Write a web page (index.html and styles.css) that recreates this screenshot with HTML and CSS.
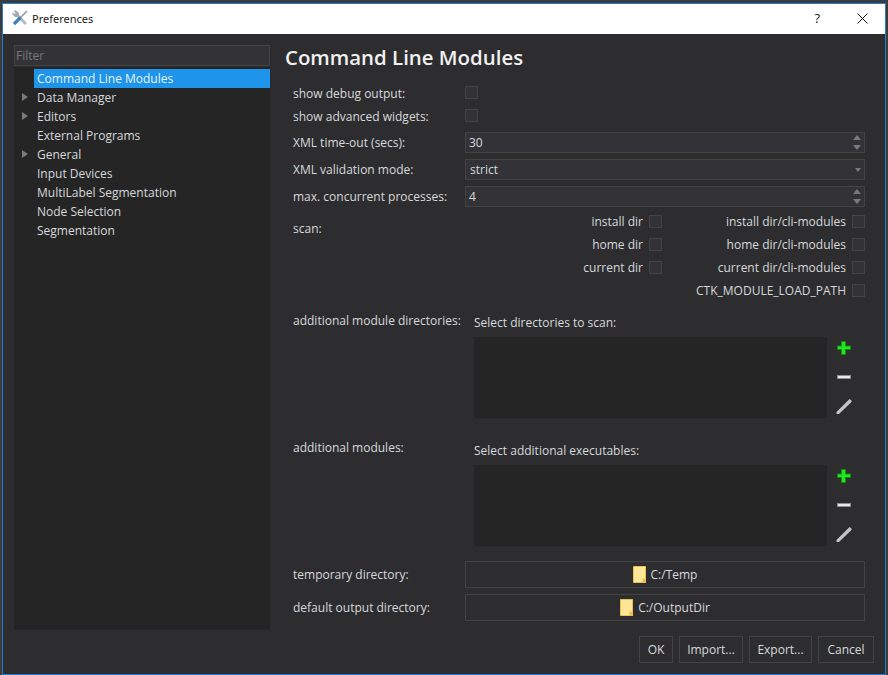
FILE: index.html
```html
<!DOCTYPE html>
<html lang="en">
<head>
  <meta charset="UTF-8" />
  <title>Preferences</title>
  <link rel="stylesheet" href="styles.css">
</head>
<body>
  <div class="window">
    <div class="titlebar">
      <svg class="app-icon" width="16" height="16" viewBox="0 0 16 16">
        <path d="M4.5 4.5 L14 14" stroke="#b4bac0" stroke-width="3" fill="none"/>
        <path d="M4 0.5 L1.5 0.5 L3.5 3 L2.5 4 L0.5 2 L0.5 4.5 L3 7 L5.5 7 L7 5.5 L7 3 Z" fill="#a3abb2"/>
        <path d="M15 1 L8 8" stroke="#8f99a3" stroke-width="1.6" fill="none"/>
        <path d="M8.5 7.5 L2 14" stroke="#3f7fc0" stroke-width="3.2" fill="none"/>
      </svg>
      <span class="title">Preferences</span>
      <span class="help">?</span>
      <svg class="close" width="11" height="11" viewBox="0 0 11 11">
        <path d="M0.5 0.5 L10.5 10.5 M10.5 0.5 L0.5 10.5" stroke="#111" stroke-width="1" fill="none"/>
      </svg>
    </div>

    <div class="content">
      <div class="sidebar">
        <input class="filter" type="text" placeholder="Filter">
        <ul class="tree">
          <li class="selected"><span>Command Line Modules</span></li>
          <li class="branch"><span>Data Manager</span></li>
          <li class="branch"><span>Editors</span></li>
          <li><span>External Programs</span></li>
          <li class="branch"><span>General</span></li>
          <li><span>Input Devices</span></li>
          <li><span>MultiLabel Segmentation</span></li>
          <li><span>Node Selection</span></li>
          <li><span>Segmentation</span></li>
        </ul>
      </div>

      <div class="page">
        <h1>Command Line Modules</h1>
        <div class="form">
          <label class="row-check top">show debug output:</label>
          <div class="row-check top"><span class="check"></span></div>
          <label class="row-check">show advanced widgets:</label>
          <div class="row-check"><span class="check"></span></div>

          <label class="row-field">XML time-out (secs):</label>
          <div class="field spin">30<span class="arrows"><i class="up"></i><i class="down"></i></span></div>
          <label class="row-field">XML validation mode:</label>
          <div class="field combo">strict<i class="combo-arrow"></i></div>
          <label class="row-field">max. concurrent processes:</label>
          <div class="field spin">4<span class="arrows"><i class="up"></i><i class="down"></i></span></div>

          <label class="scan-label">scan:</label>
          <div class="scan">
            <span>install dir</span><span class="check"></span>
            <span>install dir/cli-modules</span><span class="check"></span>
            <span>home dir</span><span class="check"></span>
            <span>home dir/cli-modules</span><span class="check"></span>
            <span>current dir</span><span class="check"></span>
            <span>current dir/cli-modules</span><span class="check"></span>
            <span></span><span></span>
            <span>CTK_MODULE_LOAD_PATH</span><span class="check"></span>
          </div>

          <label class="list-label">additional module directories:</label>
          <div class="list-block">
            <div class="list-title">Select directories to scan:</div>
            <div class="list-row">
              <div class="listbox"></div>
              <div class="tools">
                <svg width="16" height="16" viewBox="0 0 16 16"><path d="M5.5 1.5 H9.5 V6 H14.5 V9.5 H9.5 V14.5 H5.5 V9.5 H1.5 V6 H5.5 Z" fill="#22e622" stroke="#0c930c" stroke-width="1"/></svg>
                <svg width="16" height="16" viewBox="0 0 16 16"><rect x="1.5" y="6.5" width="13" height="3" fill="#e8e8e8" stroke="#8c8c8c"/></svg>
                <svg width="16" height="16" viewBox="0 0 16 16"><path d="M0.5 14 L13.5 1 L15.5 2.5 L15.5 4 L3 16 L0.5 16 Z" fill="#c4c4c4"/></svg>
              </div>
            </div>
          </div>

          <label class="list-label second-label">additional modules:</label>
          <div class="list-block second">
            <div class="list-title">Select additional executables:</div>
            <div class="list-row">
              <div class="listbox"></div>
              <div class="tools">
                <svg width="16" height="16" viewBox="0 0 16 16"><path d="M5.5 1.5 H9.5 V6 H14.5 V9.5 H9.5 V14.5 H5.5 V9.5 H1.5 V6 H5.5 Z" fill="#22e622" stroke="#0c930c" stroke-width="1"/></svg>
                <svg width="16" height="16" viewBox="0 0 16 16"><rect x="1.5" y="6.5" width="13" height="3" fill="#e8e8e8" stroke="#8c8c8c"/></svg>
                <svg width="16" height="16" viewBox="0 0 16 16"><path d="M0.5 14 L13.5 1 L15.5 2.5 L15.5 4 L3 16 L0.5 16 Z" fill="#c4c4c4"/></svg>
              </div>
            </div>
          </div>

          <label class="dir-label first">temporary directory:</label>
          <div class="dir-btn first">
            <svg class="folder" width="13" height="17" viewBox="0 0 13 17"><path d="M0.5 0.5 H12.5 V16.5 H0.5 Z" fill="#ffe597" stroke="#e8c24e"/><path d="M9.5 16 V12.5 H13 V17 H9.5 Z" fill="#e8c24e"/></svg>
            C:/Temp
          </div>
          <label class="dir-label">default output directory:</label>
          <div class="dir-btn">
            <svg class="folder" width="13" height="17" viewBox="0 0 13 17"><path d="M0.5 0.5 H12.5 V16.5 H0.5 Z" fill="#ffe597" stroke="#e8c24e"/><path d="M9.5 16 V12.5 H13 V17 H9.5 Z" fill="#e8c24e"/></svg>
            C:/OutputDir
          </div>
        </div>
      </div>
    </div>

    <div class="buttons">
      <button class="btn-ok">OK</button>
      <button class="btn-import">Import...</button>
      <button class="btn-export">Export...</button>
      <button class="btn-cancel">Cancel</button>
    </div>
  </div>
</body>
</html>
```

FILE: styles.css
```css
html, body {
  margin: 0;
  padding: 0;
  background: #3a3d40;
}

body {
  width: 888px;
  height: 675px;
  overflow: hidden;
  font-family: "Open Sans", "Noto Sans", sans-serif;
  font-size: 12px;
  color: #d6d9dc;
}

.window {
  box-sizing: border-box;
  width: 884px;
  height: 672px;
  margin: 3px 0 0 2px;
  border: 1px solid #2b7cc4;
  background: #2d2d30;
}

.titlebar {
  box-sizing: border-box;
  height: 30px;
  background: #fff;
  color: #111;
  display: flex;
  align-items: center;
  padding: 0 0 2px 9px;
}

.title {
  margin-left: 4px;
  font-family: "Noto Sans", sans-serif;
  font-size: 11px;
  color: #1a1a1a;
}

.help {
  margin-left: auto;
  font-size: 13px;
}

.close {
  margin: 0 17px 0 37px;
}

.content {
  display: flex;
  padding: 11px 0 0 11px;
  height: 596px;
  box-sizing: border-box;
}

/* left side */
.sidebar {
  width: 256px;
  flex: none;
  display: flex;
  flex-direction: column;
}

.filter {
  box-sizing: border-box;
  height: 21px;
  width: 100%;
  margin: 0;
  padding: 0 1px;
  background: #333337;
  border: 1px solid #434346;
  font: 12px "Open Sans", sans-serif;
  color: #d6d9dc;
}

.filter::placeholder {
  color: #77797c;
}

.tree {
  list-style: none;
  margin: 1px 0 0;
  padding: 2px 0 0;
  flex: 1;
  background: #252526;
}

.tree li {
  height: 19px;
  line-height: 19px;
  margin-left: 20px;
  padding-left: 3px;
  position: relative;
  color: #d6d9dc;
  font-size: 12px;
}

.tree li.selected {
  background: #1e95ea;
  color: #e8f2fa;
}

.tree li.branch::before {
  content: "";
  position: absolute;
  left: -12px;
  top: 5px;
  border-left: 6px solid #7a7a7a;
  border-top: 4.5px solid transparent;
  border-bottom: 4.5px solid transparent;
}

/* right side */
.page {
  flex: 1;
  padding-left: 15px;
}

h1 {
  margin: 0 0 1px;
  height: 25px;
  line-height: 25px;
  font-size: 20.4px;
  font-weight: 600;
  color: #f1f1f1;
}

.form {
  display: grid;
  grid-template-columns: 172px 400px;
  margin: 0 0 0 8px;
  font-size: 12px;
}

.form label {
  color: #d6d9dc;
}

.row-check {
  height: 23px;
  line-height: 23px;
}

.row-check .check {
  display: block;
  margin-top: 4px;
}

.top {
  margin-top: 11px;
}

.check {
  box-sizing: border-box;
  width: 13px;
  height: 13px;
  background: #333337;
  border: 1px solid #434346;
  flex: none;
}

.row-field {
  height: 21px;
  line-height: 21px;
  margin-bottom: 6px;
}

label.row-field:nth-of-type(3),
label.row-field:nth-of-type(3) + .field {
  margin-top: 4px;
}

.field {
  box-sizing: border-box;
  height: 21px;
  line-height: 19px;
  margin-bottom: 6px;
  padding-left: 3px;
  position: relative;
  background: #333337;
  border: 1px solid #434346;
  color: #d6d9dc;
}

.combo {
  padding-left: 4px;
}

.arrows i,
.combo-arrow {
  position: absolute;
  width: 0;
  height: 0;
  border-left: 4px solid transparent;
  border-right: 4px solid transparent;
}

.arrows .up {
  right: 3px;
  top: 2px;
  border-bottom: 5px solid #77797c;
}

.arrows .down {
  right: 3px;
  bottom: 2px;
  border-top: 5px solid #77797c;
}

.combo-arrow {
  right: 3px;
  top: 8px;
  border-left-width: 3px;
  border-right-width: 3px;
  border-top: 4px solid #77797c;
}

.scan-label {
  line-height: 17px;
  margin-top: 7px;
}

.scan {
  display: grid;
  grid-template-columns: 178px 13px 178px 13px;
  column-gap: 6px;
  row-gap: 10px;
  margin-top: 2px;
  justify-content: end;
  grid-auto-rows: 13px;
  line-height: 13px;
  align-items: center;
}

.scan span:nth-child(odd) {
  text-align: right;
  white-space: nowrap;
}

.list-label {
  margin-top: 15px;
  height: 17px;
  line-height: 17px;
  white-space: nowrap;
}

.second-label {
  margin-top: 20px;
}

.list-block {
  margin-top: 18px;
  padding-left: 9px;
  height: 104px;
}

.second {
  margin-top: 24px;
}

.list-title {
  height: 17px;
  line-height: 17px;
  margin-top: -1px;
  margin-bottom: 6px;
}

.list-row {
  display: flex;
  gap: 9px;
}

.listbox {
  width: 353px;
  height: 81px;
  background: #252526;
}

.tools {
  width: 16px;
  height: 81px;
  display: flex;
  flex-direction: column;
  gap: 13px;
  padding-top: 3px;
  box-sizing: border-box;
}

.dir-label {
  height: 27px;
  line-height: 27px;
  margin-bottom: 6px;
}

.dir-btn {
  box-sizing: border-box;
  height: 27px;
  margin-bottom: 6px;
  display: flex;
  align-items: center;
  justify-content: center;
  gap: 5px;
  border: 1px solid #434346;
  background: #2d2d30;
  color: #d6d9dc;
}

.folder {
  flex: none;
}

.first {
  margin-top: 14px;
}

.buttons {
  display: flex;
  justify-content: flex-end;
  gap: 6px;
  padding: 6px 11px 0 0;
}

.buttons button {
  box-sizing: border-box;
  height: 27px;
  padding: 0;
  background: #2d2d30;
  border: 1px solid #434346;
  color: #d6d9dc;
  font: 12px "Open Sans", sans-serif;
}

.btn-ok { width: 34px; }
.btn-import { width: 64px; }
.btn-export { width: 63px; }
.btn-cancel { width: 56px; }
```
